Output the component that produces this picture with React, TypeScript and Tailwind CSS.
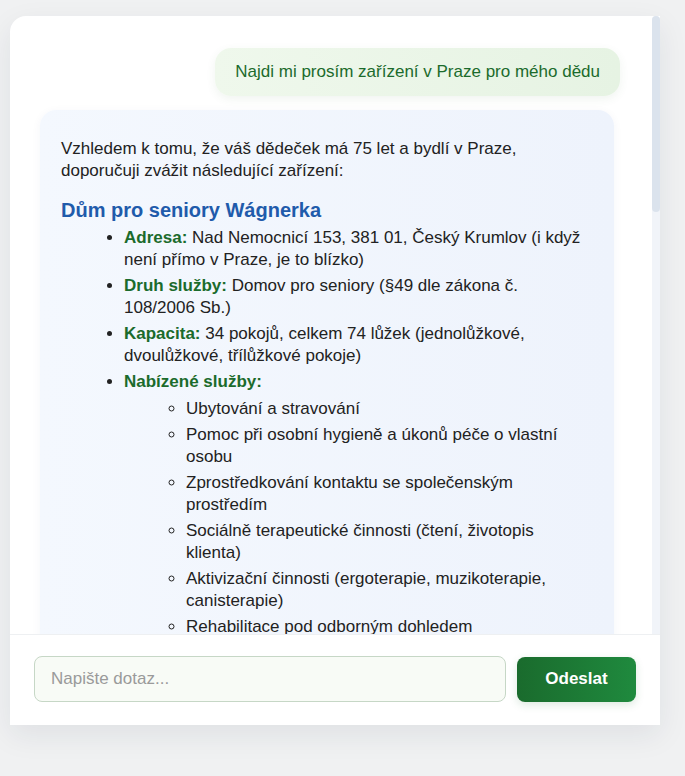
import React from 'react';

type Facility = {
  name: string;
  address: string;
  kind: string;
  capacity: string;
  services: string[];
  contact: string;
};

const facility: Facility = {
  name: 'Dům pro seniory Wágnerka',
  address: 'Nad Nemocnicí 153, 381 01, Český Krumlov (i když není přímo v Praze, je to blízko)',
  kind: 'Domov pro seniory (§49 dle zákona č. 108/2006 Sb.)',
  capacity: '34 pokojů, celkem 74 lůžek (jednolůžkové, dvoulůžkové, třílůžkové pokoje)',
  services: [
    'Ubytování a stravování',
    'Pomoc při osobní hygieně a úkonů péče o vlastní osobu',
    'Zprostředkování kontaktu se společenským prostředím',
    'Sociálně terapeutické činnosti (čtení, životopis klienta)',
    'Aktivizační činnosti (ergoterapie, muzikoterapie, canisterapie)',
    'Rehabilitace pod odborným dohledem',
  ],
  contact: 'tel. 380 712 111',
};

const Label = ({ children }: { children: React.ReactNode }) => (
  <strong className="font-bold text-[#1b6b2c]">{children}</strong>
);

const FacilityBlock = ({ f }: { f: Facility }) => (
  <div>
    <h3 className="mt-[14px] mb-[3px] text-[20px] leading-[28px] font-bold text-[#1f5bab]">{f.name}</h3>
    <ul className="list-disc pl-[63px]">
      <li className="mb-1">
        <Label>Adresa:</Label> {f.address}
      </li>
      <li className="mb-1">
        <Label>Druh služby:</Label> {f.kind}
      </li>
      <li className="mb-1">
        <Label>Kapacita:</Label> {f.capacity}
      </li>
      <li className="mb-1">
        <Label>Nabízené služby:</Label>
        <ul className="mt-[5px] list-[circle] pl-[62px]">
          {f.services.map((s) => (
            <li key={s} className="mb-1">
              {s}
            </li>
          ))}
        </ul>
      </li>
      <li className="mb-1">
        <Label>Kontakt:</Label> {f.contact}
      </li>
    </ul>
  </div>
);

export default function App() {
  return (
    <div className="min-h-screen bg-[#f0f1f2] pt-4 pl-[10px] [font-family:'Liberation_Sans',Arial,sans-serif]">
      <div className="flex w-[650px] flex-col rounded-tl-2xl bg-white shadow-[0_10px_30px_rgba(30,40,60,0.08)]">
        <div className="flex h-[618px]">
          <div className="flex-1 overflow-hidden rounded-tl-2xl">
            <div className="flex flex-col pt-8 pb-8 pl-[30px] pr-[32px]">
              <div className="self-end rounded-2xl bg-gradient-to-r from-[#eff8ec] to-[#e6f3e3] px-5 py-[13px] text-[17px] leading-[22px] text-[#1b6b2c] shadow-[0_3px_10px_rgba(60,120,60,0.08)]">
                Najdi mi prosím zařízení v Praze pro mého dědu
              </div>
              <div className="mt-[14px] w-[574px] rounded-2xl bg-gradient-to-r from-[#f4f8fe] to-[#eef3fc] px-[21px] pt-[28px] pb-6 text-[17px] leading-[22px] text-[#222] shadow-[0_2px_10px_rgba(40,60,120,0.05)]">
                <p>
                  Vzhledem k tomu, že váš dědeček má 75 let a bydlí v Praze, doporučuji zvážit následující zařízení:
                </p>
                <FacilityBlock f={facility} />
              </div>
            </div>
          </div>
          {/* scrollbar, scrolled to the top */}
          <div className="flex w-2 flex-col rounded-t bg-[#f1f4f9]">
            <div className="h-[196px] rounded bg-[#dbe3ed]" />
          </div>
        </div>
        <div className="flex items-center gap-[11px] border-t border-[#eef0f2] px-6 pt-[21px] pb-[23px]">
          <input
            className="h-[46px] flex-1 rounded-lg border border-[#c6d7c6] bg-[#f8fbf6] px-4 text-[17px] text-[#222] outline-none placeholder:text-[#9a9a9a]"
            placeholder="Napište dotaz..."
          />
          <button className="h-[45px] w-[119px] rounded-lg bg-gradient-to-r from-[#1a6b2d] to-[#1f8a3e] text-[17px] font-bold text-white shadow-[0_3px_8px_rgba(30,110,50,0.15)]">
            Odeslat
          </button>
        </div>
      </div>
    </div>
  );
}
